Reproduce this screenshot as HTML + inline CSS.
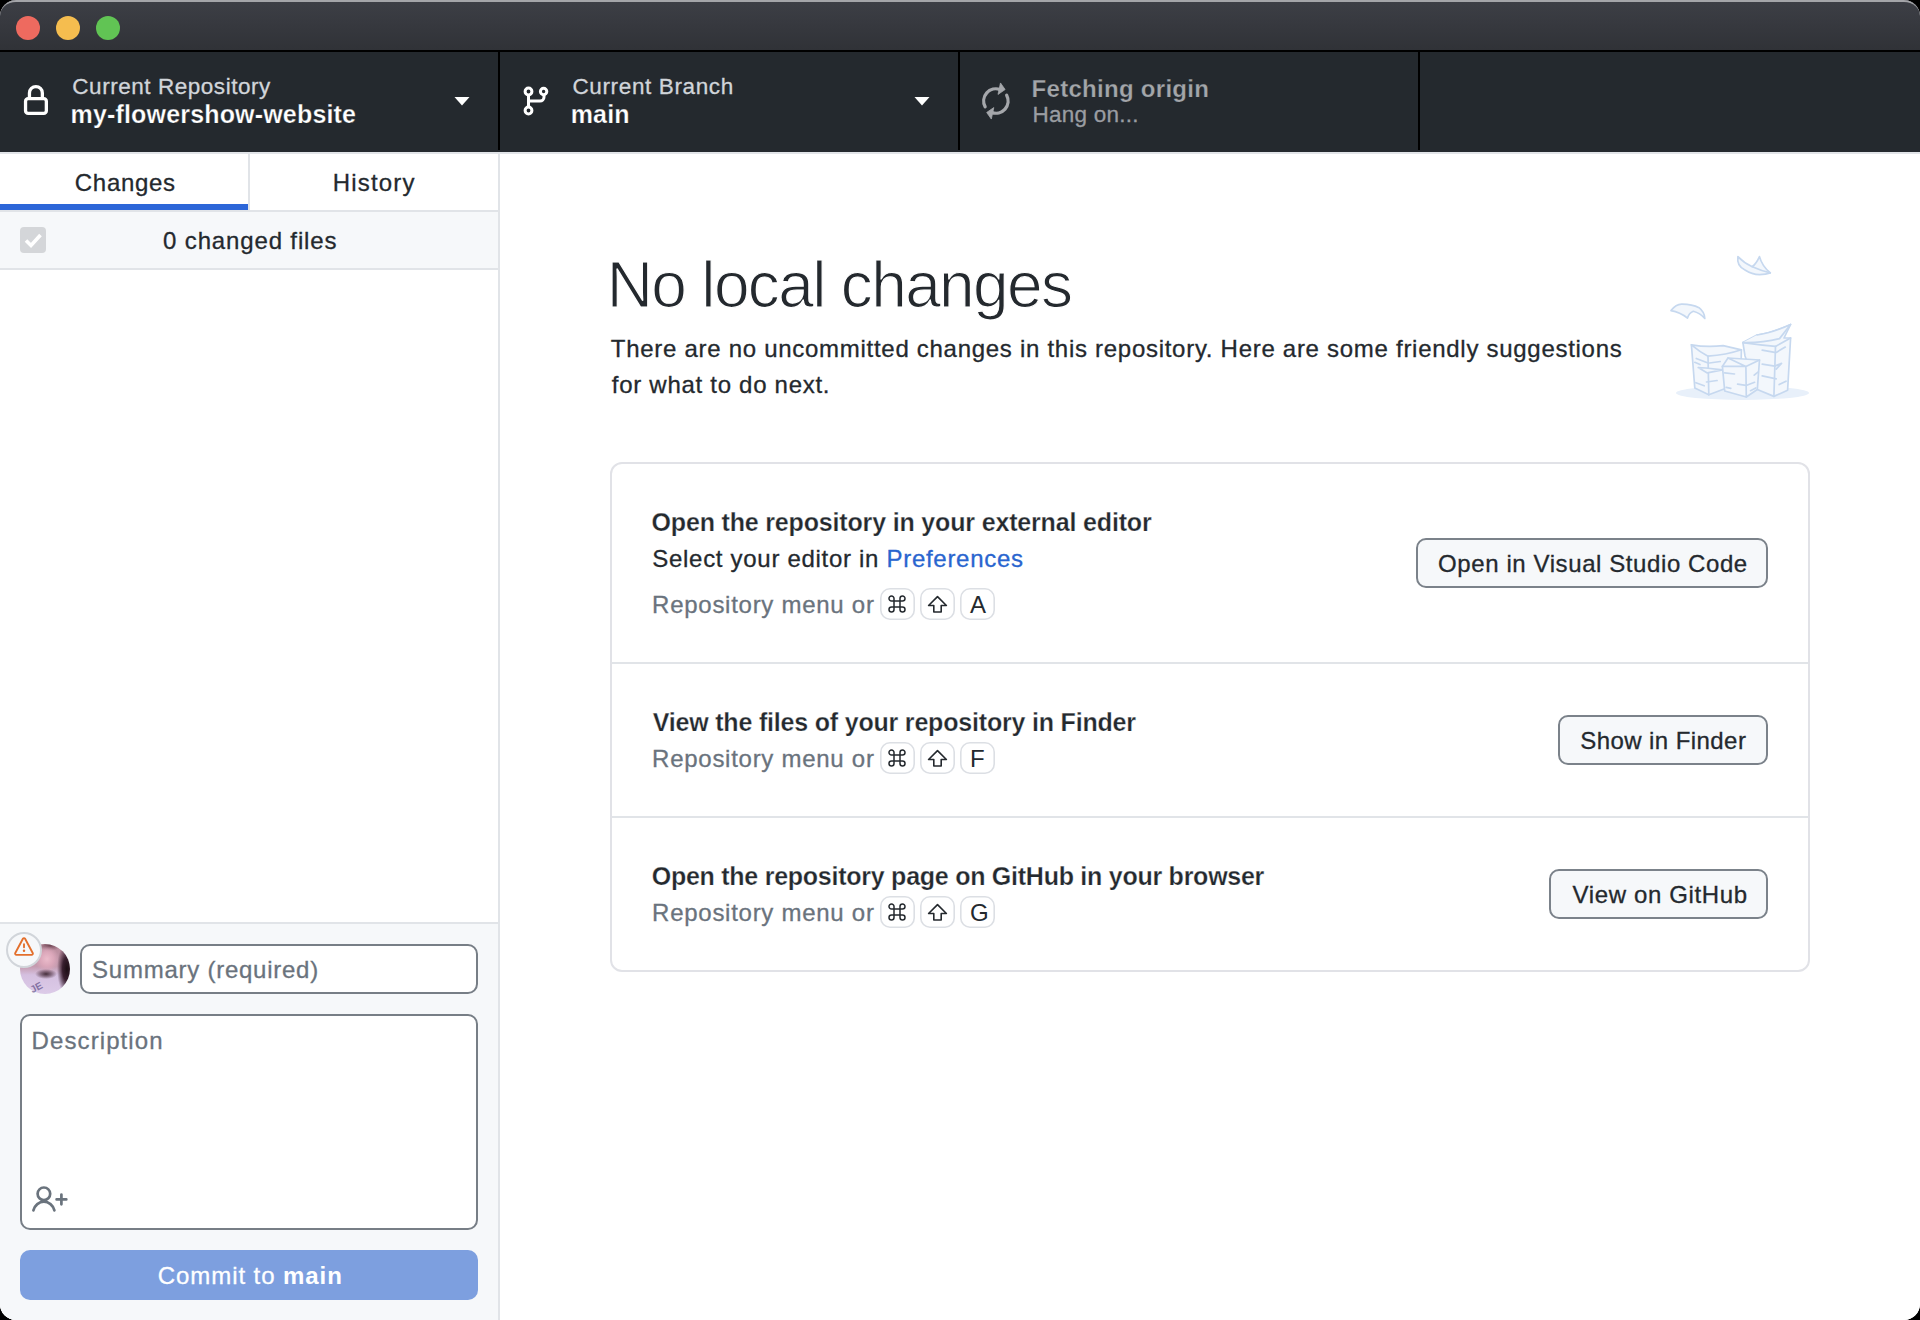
<!DOCTYPE html>
<html><head><meta charset="utf-8"><title>GitHub Desktop</title>
<style>
html,body{margin:0;padding:0;background:#000;width:1920px;height:1320px;overflow:hidden}
#win{position:absolute;left:0;top:0;width:1920px;height:1320px;border-radius:16px;overflow:hidden;background:#fff;
font-family:"Liberation Sans",sans-serif}
.t{position:absolute;white-space:nowrap}
.r{position:absolute}
b{font-weight:700;-webkit-text-stroke-width:0}
</style></head><body><div id="win">
<div class="r" style="left:0px;top:0px;width:1920px;height:50px;background:linear-gradient(#3d3f46,#303237);"></div>
<div class="r" style="left:0;top:0;width:1920px;height:60px;border-radius:16px 16px 0 0;border-top:2px solid #a4a5a9;box-sizing:border-box;"></div>
<div class="r" style="left:16px;top:16px;width:24px;height:24px;border-radius:50%;background:#ee6a5f"></div>
<div class="r" style="left:56px;top:16px;width:24px;height:24px;border-radius:50%;background:#f5bd4f"></div>
<div class="r" style="left:96px;top:16px;width:24px;height:24px;border-radius:50%;background:#61c454"></div>
<div class="r" style="left:0px;top:50px;width:1920px;height:2px;background:#000;"></div>
<div class="r" style="left:0px;top:52px;width:1920px;height:100px;background:#24292e;"></div>
<div class="r" style="left:498px;top:52px;width:2px;height:98px;background:#000;"></div>
<div class="r" style="left:958px;top:52px;width:2px;height:98px;background:#000;"></div>
<div class="r" style="left:1418px;top:52px;width:2px;height:98px;background:#000;"></div>
<div class="r" style="left:0px;top:152px;width:1920px;height:2px;background:#e1e4e8;"></div>
<svg class="r" style="left:22px;top:83px" width="28" height="34" viewBox="0 0 28 34">
<path d="M7.45 15 V10 A6.45 6.45 0 0 1 20.35 10 V15" fill="none" stroke="#fff" stroke-width="3.3"/>
<rect x="3.55" y="15.55" width="20.8" height="14.9" rx="2.6" fill="none" stroke="#fff" stroke-width="3.3"/>
</svg>
<div class="t" style="left:72.30px;top:69.20px;height:36px;line-height:36px;font-size:22.5px;font-weight:400;color:#d1d5da;letter-spacing:0.541px;-webkit-text-stroke-width:0.3px;">Current Repository</div>
<div class="t" style="left:70.50px;top:94.34px;height:40px;line-height:40px;font-size:25px;font-weight:700;color:#ffffff;letter-spacing:0.175px;-webkit-text-stroke:0.25px #24292e;">my-flowershow-website</div>
<svg class="r" style="left:454px;top:97px" width="16" height="9" viewBox="0 0 16 9"><path d="M0.5 0 H15.5 L8 8.4 Z" fill="#fff"/></svg>
<svg class="r" style="left:914px;top:97px" width="16" height="9" viewBox="0 0 16 9"><path d="M0.5 0 H15.5 L8 8.4 Z" fill="#fff"/></svg>
<svg class="r" style="left:520px;top:84px" width="32" height="34" viewBox="0 0 32 34">
<g fill="none" stroke="#fff" stroke-width="3">
<circle cx="8.5" cy="7.5" r="3.4"/><circle cx="8.5" cy="26.5" r="3.4"/><circle cx="23.6" cy="7.5" r="3.2"/>
<path d="M8.5 11 V23"/><path d="M24 11 V13 A4 4 0 0 1 20 17 H8.5"/>
</g></svg>
<div class="t" style="left:572.50px;top:69.20px;height:36px;line-height:36px;font-size:22.5px;font-weight:400;color:#d1d5da;letter-spacing:0.623px;-webkit-text-stroke-width:0.3px;">Current Branch</div>
<div class="t" style="left:570.70px;top:94.34px;height:40px;line-height:40px;font-size:25px;font-weight:700;color:#ffffff;letter-spacing:0.167px;-webkit-text-stroke:0.25px #24292e;">main</div>
<svg class="r" style="left:975px;top:78px" width="42" height="46" viewBox="-20.9 -23 42 46">
<path d="M-10.77 5.73 A12.2 12.2 0 0 1 4.37 -11.39 M10.77 -5.73 A12.2 12.2 0 0 1 -4.37 11.39" fill="none" stroke="#a5a7ab" stroke-width="3.3" stroke-linecap="round"/>
<path d="M4.58 -18.06 L2.10 -6.59 L9.22 -11.46Z M-4.58 18.06 L-2.10 6.59 L-9.22 11.46Z" fill="#a5a7ab" stroke="#a5a7ab" stroke-width="0.8" stroke-linejoin="round"/>
</svg>
<div class="t" style="left:1031.60px;top:69.68px;height:38px;line-height:38px;font-size:24px;font-weight:700;color:#a3a6aa;letter-spacing:0.286px;-webkit-text-stroke:0.25px #24292e;">Fetching origin</div>
<div class="t" style="left:1032.40px;top:97.20px;height:36px;line-height:36px;font-size:22.5px;font-weight:400;color:#9a9da2;letter-spacing:0.256px;-webkit-text-stroke-width:0.3px;">Hang on...</div>
<div class="r" style="left:0px;top:154px;width:498px;height:1166px;background:#ffffff;"></div>
<div class="r" style="left:498px;top:154px;width:2px;height:1166px;background:#e1e4e8;"></div>
<div class="r" style="left:0px;top:204px;width:248px;height:6px;background:#2c66d8;"></div>
<div class="r" style="left:248px;top:154px;width:2px;height:56px;background:#e1e4e8;"></div>
<div class="r" style="left:0px;top:210px;width:498px;height:2px;background:#e1e4e8;"></div>
<div class="t" style="left:74.80px;top:163.68px;height:38px;line-height:38px;font-size:24px;font-weight:400;color:#24292e;letter-spacing:0.7px;-webkit-text-stroke-width:0.3px;">Changes</div>
<div class="t" style="left:332.80px;top:163.68px;height:38px;line-height:38px;font-size:24px;font-weight:400;color:#24292e;letter-spacing:1.167px;-webkit-text-stroke-width:0.3px;">History</div>
<div class="r" style="left:0px;top:212px;width:498px;height:56px;background:#f6f8fa;"></div>
<div class="r" style="left:0px;top:268px;width:498px;height:2px;background:#e1e4e8;"></div>
<svg class="r" style="left:20px;top:227px" width="26" height="26" viewBox="0 0 26 26">
<rect x="0" y="0" width="26" height="26" rx="4" fill="#d4d6d9"/>
<path d="M6 13.5 L11 18.5 L20.5 8" fill="none" stroke="#fff" stroke-width="3.6"/>
</svg>
<div class="t" style="left:163.10px;top:221.68px;height:38px;line-height:38px;font-size:24px;font-weight:400;color:#24292e;letter-spacing:0.85px;-webkit-text-stroke-width:0.3px;">0 changed files</div>
<div class="r" style="left:0px;top:922px;width:498px;height:2px;background:#e1e4e8;"></div>
<div class="r" style="left:0px;top:924px;width:498px;height:396px;background:#f6f8fa;"></div>
<div class="r" style="left:20px;top:944px;width:50px;height:50px;border-radius:50%;overflow:hidden;
background:radial-gradient(ellipse 11px 5px at 26px 30px,rgba(45,22,32,.85) 0%,rgba(60,30,42,.5) 50%,rgba(60,30,42,0) 100%),
radial-gradient(ellipse 10px 26px at 47px 25px,#1c0e14 0%,#3a2030 45%,rgba(90,55,70,0) 100%),
radial-gradient(ellipse 12px 13px at 27px 15px,#ebbccb 0%,#dba7ba 55%,rgba(210,160,180,0) 100%),
radial-gradient(ellipse 11px 6px at 30px 1px,#6d4452 0%,rgba(109,68,82,0) 100%),
linear-gradient(180deg,#b98a9a 0%,#c59cb0 45%,#d5c0e0 62%,#dccbe8 100%);"></div>
<div class="r" style="left:30px;top:981px;width:16px;height:11px;color:#4d3c7a;font:bold 10px/11px 'Liberation Sans',sans-serif;transform:rotate(-28deg);opacity:.6">JE</div>
<div class="r" style="left:6px;top:932px;width:36px;height:36px;border-radius:50%;background:#f6f8fa;border:2px solid #d1d5da;box-sizing:border-box"></div>
<svg class="r" style="left:14px;top:936.5px" width="20" height="20" viewBox="0 0 16 16">
<path fill="#e36f2c" d="M6.457 1.047c.659-1.234 2.427-1.234 3.086 0l6.082 11.378A1.75 1.75 0 0 1 14.082 15H1.918a1.75 1.75 0 0 1-1.543-2.575Zm1.763.707a.25.25 0 0 0-.44 0L1.698 13.132a.25.25 0 0 0 .22.368h12.164a.25.25 0 0 0 .22-.368Zm.53 3.996v2.5a.75.75 0 0 1-1.5 0v-2.5a.75.75 0 0 1 1.5 0ZM9 11a1 1 0 1 1-2 0 1 1 0 0 1 2 0Z"/>
</svg>
<div class="r" style="left:80px;top:944px;width:398px;height:50px;border:2px solid #777e86;border-radius:10px;background:#fff;box-sizing:border-box"></div>
<div class="t" style="left:92.10px;top:950.68px;height:38px;line-height:38px;font-size:24px;font-weight:400;color:#6a737d;letter-spacing:0.747px;-webkit-text-stroke-width:0.3px;">Summary (required)</div>
<div class="r" style="left:20px;top:1014px;width:458px;height:216px;border:2px solid #777e86;border-radius:10px;background:#fff;box-sizing:border-box"></div>
<div class="t" style="left:31.60px;top:1021.68px;height:38px;line-height:38px;font-size:24px;font-weight:400;color:#6a737d;letter-spacing:1.09px;-webkit-text-stroke-width:0.3px;">Description</div>
<svg class="r" style="left:26px;top:1180px" width="48" height="38" viewBox="26 1180 48 38">
<g fill="none" stroke="#6a737d" stroke-width="2.7" stroke-linecap="round">
<circle cx="43.9" cy="1193.8" r="6.3"/>
<path d="M33.4 1210.4 A10.9 11.9 0 0 1 54.4 1210.4"/>
<path d="M56.6 1199.4 H66.3 M61.4 1194.5 V1204.3"/>
</g></svg>
<div class="r" style="left:20px;top:1250px;width:458px;height:50px;border-radius:10px;background:#7d9fdf"></div>
<div class="t" style="left:157.80px;top:1256.68px;height:38px;line-height:38px;font-size:24px;font-weight:400;color:#ffffff;letter-spacing:0.923px;-webkit-text-stroke-width:0.3px;">Commit to <b>main</b></div>
<div class="r" style="left:500px;top:154px;width:1420px;height:1166px;background:#ffffff;"></div>
<div class="t" style="left:606.70px;top:233.82px;height:102px;line-height:102px;font-size:64px;font-weight:400;color:#24292e;letter-spacing:-1.647px;-webkit-text-stroke:1.2px #fff;">No local changes</div>
<div class="t" style="left:610.80px;top:329.68px;height:38px;line-height:38px;font-size:24px;font-weight:400;color:#24292e;letter-spacing:0.716px;-webkit-text-stroke-width:0.3px;">There are no uncommitted changes in this repository. Here are some friendly suggestions</div>
<div class="t" style="left:611.80px;top:365.68px;height:38px;line-height:38px;font-size:24px;font-weight:400;color:#24292e;letter-spacing:0.716px;-webkit-text-stroke-width:0.3px;">for what to do next.</div>
<svg class="r" style="left:1640px;top:230px" width="200" height="190" viewBox="1640 230 200 190">
<ellipse cx="1742.5" cy="393" rx="66.5" ry="6.9" fill="#e8f0fa"/>
<g fill="#f3f7fc" stroke="#c6d8ef" stroke-width="1.7" stroke-linejoin="round" stroke-linecap="round">
<path d="M1737.9 256.6 Q1736.5 266 1745 270 Q1752 274.5 1759.5 274.6 Q1766 274.5 1770.3 272.9 Q1762 266 1759.5 256.6 Q1756 264 1752.3 266.7 Q1744 263 1737.9 256.6Z"/>
<path d="M1752.3 266.7 Q1762 271 1770.3 272.9" fill="none"/>
<path d="M1671 310.6 Q1676 304 1681.7 304.1 Q1692 304 1699 307.7 Q1704.5 312 1704.8 318.5 Q1700 313 1693.3 311.3 Q1689 313 1687.5 318.1 Q1680 312 1671 310.6Z"/>
<path d="M1691.4 344.8 Q1707 347.5 1723.2 345.6 L1741.4 349.8 L1741 372 L1724.7 388.8 L1708.8 394.8 L1694.8 388 Z"/>
<path d="M1691.4 344.8 Q1700 352 1708 356.2 Q1726 355 1741.4 349.8" fill="none"/>
<path d="M1708 356.2 L1708.8 394.8" fill="none"/>
<path d="M1696.3 358.5 L1708 363 M1694.8 362.3 L1700 364.5 M1709.5 363 L1720.2 361.5 M1706.5 382 L1717.1 380.5 M1695.9 382.7 L1704.2 385.8" fill="none"/>
<path d="M1698.2 367.6 L1707.3 372.9 L1722.4 369.8 L1706 368 Z" />
<path d="M1742.9 342.6 L1757 335 Q1772 333 1790.6 324.5 L1784 338 L1790.6 338 L1787.6 390.3 L1773.9 396.4 L1757.3 389.5 L1745 356 Z"/>
<path d="M1742.9 342.6 Q1760 345 1775.5 346.4 L1790.6 338" fill="none"/>
<path d="M1757 335 Q1772 333 1790.6 324.5 L1779.5 338.6 Q1762 343 1742.9 342.6" fill="#f3f7fc"/>
<path d="M1775.5 346.4 L1773.9 396.4" fill="none"/>
<path d="M1762.2 350.2 L1774.7 352.4 M1776.2 352.4 L1785.3 347.1 M1762.2 364.2 L1774.7 366.1 M1762.2 375.9 L1776.2 378.9 M1779.2 384.6 L1786 381.2" fill="none"/>
<path d="M1774.7 366.1 L1781.5 363.4 L1776.2 369.1" fill="none"/>
<path d="M1722.4 366.4 L1728 358 L1759.5 360 L1757.3 389.5 L1746.3 397 L1724.7 391 Z"/>
<path d="M1722.4 366.4 L1745.9 366.4 L1759.5 360 M1728 358 L1745.9 366.4 M1745.9 366.4 L1746.3 397" fill="none"/>
<path d="M1724.7 372.9 L1734.5 374 M1737.6 384.2 L1745.9 385.4 M1726.2 387.3 L1730.8 388.4 M1754.2 375.2 L1758 372.1 M1747.4 385 L1754.6 382.3 M1750.5 390.7 L1755.8 388" fill="none"/>
</g></svg>
<div class="r" style="left:610px;top:462px;width:1200px;height:510px;border:2px solid #e1e2e7;border-radius:12px;box-sizing:border-box;background:#fff"></div>
<div class="r" style="left:612px;top:662px;width:1196px;height:2px;background:#e1e4e8;"></div>
<div class="r" style="left:612px;top:816px;width:1196px;height:2px;background:#e1e4e8;"></div>
<div class="t" style="left:651.50px;top:502.34px;height:40px;line-height:40px;font-size:25px;font-weight:700;color:#24292e;letter-spacing:-0.164px;-webkit-text-stroke:0.25px #fff;">Open the repository in your external editor</div>
<div class="t" style="left:652.30px;top:539.68px;height:38px;line-height:38px;font-size:24px;font-weight:400;color:#24292e;letter-spacing:0.703px;-webkit-text-stroke-width:0.3px;">Select your editor in <span style="color:#2965cf">Preferences</span></div>
<div class="t" style="left:652.10px;top:585.68px;height:38px;line-height:38px;font-size:24px;font-weight:400;color:#6a737d;letter-spacing:0.729px;-webkit-text-stroke-width:0.3px;">Repository menu or</div>
<div class="r" style="left:880px;top:588px;width:35px;height:32px;box-shadow:inset 0 0 0 1.6px #dcdfe4;border-radius:10px;background:#fff"></div>
<svg class="r" style="left:887.4px;top:594.2px" width="20" height="20" viewBox="0 0 20 20"><path d="M7 7 H13 V13 H7 Z M7 7 V4.5 A2.5 2.5 0 1 0 4.5 7 H7 M13 7 V4.5 A2.5 2.5 0 1 1 15.5 7 H13 M13 13 V15.5 A2.5 2.5 0 1 0 15.5 13 H13 M7 13 V15.5 A2.5 2.5 0 1 1 4.5 13 H7" fill="none" stroke="#24292e" stroke-width="1.5"/></svg>
<div class="r" style="left:920px;top:588px;width:35px;height:32px;box-shadow:inset 0 0 0 1.6px #dcdfe4;border-radius:10px;background:#fff"></div>
<svg class="r" style="left:920px;top:588px" width="35" height="32" viewBox="0 0 35 32"><path d="M17.5 8.6 L8.6 17.5 H13.8 V24 H21.2 V17.5 H26.4 Z" fill="none" stroke="#24292e" stroke-width="1.6" stroke-linejoin="round"/></svg>
<div class="r" style="left:960px;top:588px;width:35px;height:32px;box-shadow:inset 0 0 0 1.6px #dcdfe4;border-radius:10px;background:#fff"></div>
<div class="t" style="left:970.00px;top:585.68px;height:38px;line-height:38px;font-size:24px;font-weight:400;color:#24292e;letter-spacing:0px;">A</div>
<div class="r" style="left:1416px;top:538px;width:352px;height:50px;border:2px solid #7b828a;border-radius:10px;box-sizing:border-box;background:#f6f8fa"></div>
<div class="t" style="left:1438.10px;top:544.68px;height:38px;line-height:38px;font-size:24px;font-weight:400;color:#24292e;letter-spacing:0.588px;-webkit-text-stroke-width:0.3px;">Open in Visual Studio Code</div>
<div class="t" style="left:652.70px;top:702.34px;height:40px;line-height:40px;font-size:25px;font-weight:700;color:#24292e;letter-spacing:-0.19px;-webkit-text-stroke:0.25px #fff;">View the files of your repository in Finder</div>
<div class="t" style="left:652.10px;top:739.68px;height:38px;line-height:38px;font-size:24px;font-weight:400;color:#6a737d;letter-spacing:0.729px;-webkit-text-stroke-width:0.3px;">Repository menu or</div>
<div class="r" style="left:880px;top:742px;width:35px;height:32px;box-shadow:inset 0 0 0 1.6px #dcdfe4;border-radius:10px;background:#fff"></div>
<svg class="r" style="left:887.4px;top:748.2px" width="20" height="20" viewBox="0 0 20 20"><path d="M7 7 H13 V13 H7 Z M7 7 V4.5 A2.5 2.5 0 1 0 4.5 7 H7 M13 7 V4.5 A2.5 2.5 0 1 1 15.5 7 H13 M13 13 V15.5 A2.5 2.5 0 1 0 15.5 13 H13 M7 13 V15.5 A2.5 2.5 0 1 1 4.5 13 H7" fill="none" stroke="#24292e" stroke-width="1.5"/></svg>
<div class="r" style="left:920px;top:742px;width:35px;height:32px;box-shadow:inset 0 0 0 1.6px #dcdfe4;border-radius:10px;background:#fff"></div>
<svg class="r" style="left:920px;top:742px" width="35" height="32" viewBox="0 0 35 32"><path d="M17.5 8.6 L8.6 17.5 H13.8 V24 H21.2 V17.5 H26.4 Z" fill="none" stroke="#24292e" stroke-width="1.6" stroke-linejoin="round"/></svg>
<div class="r" style="left:960px;top:742px;width:35px;height:32px;box-shadow:inset 0 0 0 1.6px #dcdfe4;border-radius:10px;background:#fff"></div>
<div class="t" style="left:970.00px;top:739.68px;height:38px;line-height:38px;font-size:24px;font-weight:400;color:#24292e;letter-spacing:0px;">F</div>
<div class="r" style="left:1558px;top:715px;width:210px;height:50px;border:2px solid #7b828a;border-radius:10px;box-sizing:border-box;background:#f6f8fa"></div>
<div class="t" style="left:1580.30px;top:721.68px;height:38px;line-height:38px;font-size:24px;font-weight:400;color:#24292e;letter-spacing:0.423px;-webkit-text-stroke-width:0.3px;">Show in Finder</div>
<div class="t" style="left:651.70px;top:856.34px;height:40px;line-height:40px;font-size:25px;font-weight:700;color:#24292e;letter-spacing:-0.253px;-webkit-text-stroke:0.25px #fff;">Open the repository page on GitHub in your browser</div>
<div class="t" style="left:652.10px;top:893.68px;height:38px;line-height:38px;font-size:24px;font-weight:400;color:#6a737d;letter-spacing:0.729px;-webkit-text-stroke-width:0.3px;">Repository menu or</div>
<div class="r" style="left:880px;top:896px;width:35px;height:32px;box-shadow:inset 0 0 0 1.6px #dcdfe4;border-radius:10px;background:#fff"></div>
<svg class="r" style="left:887.4px;top:902.2px" width="20" height="20" viewBox="0 0 20 20"><path d="M7 7 H13 V13 H7 Z M7 7 V4.5 A2.5 2.5 0 1 0 4.5 7 H7 M13 7 V4.5 A2.5 2.5 0 1 1 15.5 7 H13 M13 13 V15.5 A2.5 2.5 0 1 0 15.5 13 H13 M7 13 V15.5 A2.5 2.5 0 1 1 4.5 13 H7" fill="none" stroke="#24292e" stroke-width="1.5"/></svg>
<div class="r" style="left:920px;top:896px;width:35px;height:32px;box-shadow:inset 0 0 0 1.6px #dcdfe4;border-radius:10px;background:#fff"></div>
<svg class="r" style="left:920px;top:896px" width="35" height="32" viewBox="0 0 35 32"><path d="M17.5 8.6 L8.6 17.5 H13.8 V24 H21.2 V17.5 H26.4 Z" fill="none" stroke="#24292e" stroke-width="1.6" stroke-linejoin="round"/></svg>
<div class="r" style="left:960px;top:896px;width:35px;height:32px;box-shadow:inset 0 0 0 1.6px #dcdfe4;border-radius:10px;background:#fff"></div>
<div class="t" style="left:970.00px;top:893.68px;height:38px;line-height:38px;font-size:24px;font-weight:400;color:#24292e;letter-spacing:0px;">G</div>
<div class="r" style="left:1549px;top:869px;width:219px;height:50px;border:2px solid #7b828a;border-radius:10px;box-sizing:border-box;background:#f6f8fa"></div>
<div class="t" style="left:1572.60px;top:875.68px;height:38px;line-height:38px;font-size:24px;font-weight:400;color:#24292e;letter-spacing:0.631px;-webkit-text-stroke-width:0.3px;">View on GitHub</div>
</div></body></html>
